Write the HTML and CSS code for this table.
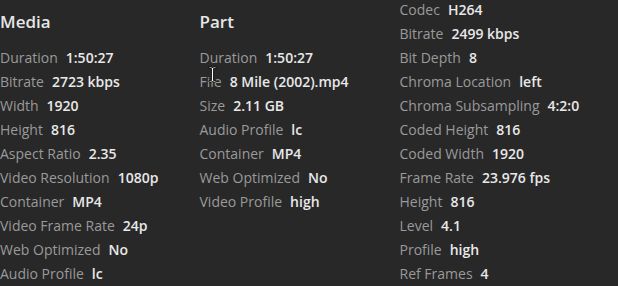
FILE: index.html
```html
<!DOCTYPE html>
<html>
<head>
<meta charset="utf-8">
<link rel="stylesheet" href="styles.css">
</head>
<body>
<div class="panel">
  <section class="col">
    <h2 class="heading">Media</h2>
    <div class="row"><span class="label">Duration</span><span class="value">1:50:27</span></div>
    <div class="row"><span class="label">Bitrate</span><span class="value">2723 kbps</span></div>
    <div class="row"><span class="label">Width</span><span class="value">1920</span></div>
    <div class="row"><span class="label">Height</span><span class="value">816</span></div>
    <div class="row"><span class="label">Aspect Ratio</span><span class="value">2.35</span></div>
    <div class="row"><span class="label">Video Resolution</span><span class="value">1080p</span></div>
    <div class="row"><span class="label">Container</span><span class="value">MP4</span></div>
    <div class="row"><span class="label">Video Frame Rate</span><span class="value">24p</span></div>
    <div class="row"><span class="label">Web Optimized</span><span class="value">No</span></div>
    <div class="row"><span class="label">Audio Profile</span><span class="value">lc</span></div>
  </section>
  <section class="col">
    <h2 class="heading">Part</h2>
    <div class="row"><span class="label">Duration</span><span class="value">1:50:27</span></div>
    <div class="row"><span class="label">File</span><span class="value">8 Mile (2002).mp4</span></div>
    <div class="row"><span class="label">Size</span><span class="value">2.11 GB</span></div>
    <div class="row"><span class="label">Audio Profile</span><span class="value">lc</span></div>
    <div class="row"><span class="label">Container</span><span class="value">MP4</span></div>
    <div class="row"><span class="label">Web Optimized</span><span class="value">No</span></div>
    <div class="row"><span class="label">Video Profile</span><span class="value">high</span></div>
  </section>
  <section class="col col-scrolled">
    <div class="row"><span class="label">Codec</span><span class="value">H264</span></div>
    <div class="row"><span class="label">Bitrate</span><span class="value">2499 kbps</span></div>
    <div class="row"><span class="label">Bit Depth</span><span class="value">8</span></div>
    <div class="row"><span class="label">Chroma Location</span><span class="value">left</span></div>
    <div class="row"><span class="label">Chroma Subsampling</span><span class="value">4:2:0</span></div>
    <div class="row"><span class="label">Coded Height</span><span class="value">816</span></div>
    <div class="row"><span class="label">Coded Width</span><span class="value">1920</span></div>
    <div class="row"><span class="label">Frame Rate</span><span class="value">23.976 fps</span></div>
    <div class="row"><span class="label">Height</span><span class="value">816</span></div>
    <div class="row"><span class="label">Level</span><span class="value">4.1</span></div>
    <div class="row"><span class="label">Profile</span><span class="value">high</span></div>
    <div class="row"><span class="label">Ref Frames</span><span class="value">4</span></div>
  </section>
  <svg class="cursor" width="9" height="17" viewBox="0 0 9 17">
    <path d="M1 1h2.5l1 1 1-1H8v1.5H5.5v12H8V16H5.5l-1-1-1 1H1v-1.5h2.5v-12H1z" fill="#fff" stroke="#000" stroke-width="0.8"/>
  </svg>
</div>
</body>
</html>
```
FILE: styles.css
```css
html, body {
  margin: 0;
  padding: 0;
  background: #282828;
}
body {
  width: 618px;
  height: 286px;
  overflow: hidden;
  font-family: "Open Sans", "Noto Sans", sans-serif;
}
.panel {
  position: relative;
  display: grid;
  grid-template-columns: 199.5px 200px 1fr;
  height: 286px;
  overflow: hidden;
}
.col {
  padding-top: 10px;
}
.col-scrolled {
  padding-top: 0;
  margin-top: -2px;
}
.heading {
  margin: 0 0 12px;
  font-size: 17px;
  line-height: 24px;
  font-weight: 600;
  color: #e6e6e6;
}
.row {
  font-size: 14px;
  line-height: 24px;
  white-space: nowrap;
}
.label {
  color: #9a9a9a;
  margin-right: 8px;
}
.value {
  color: #e8e8e8;
  font-weight: 600;
}
.cursor {
  position: absolute;
  left: 208px;
  top: 66px;
}
```
